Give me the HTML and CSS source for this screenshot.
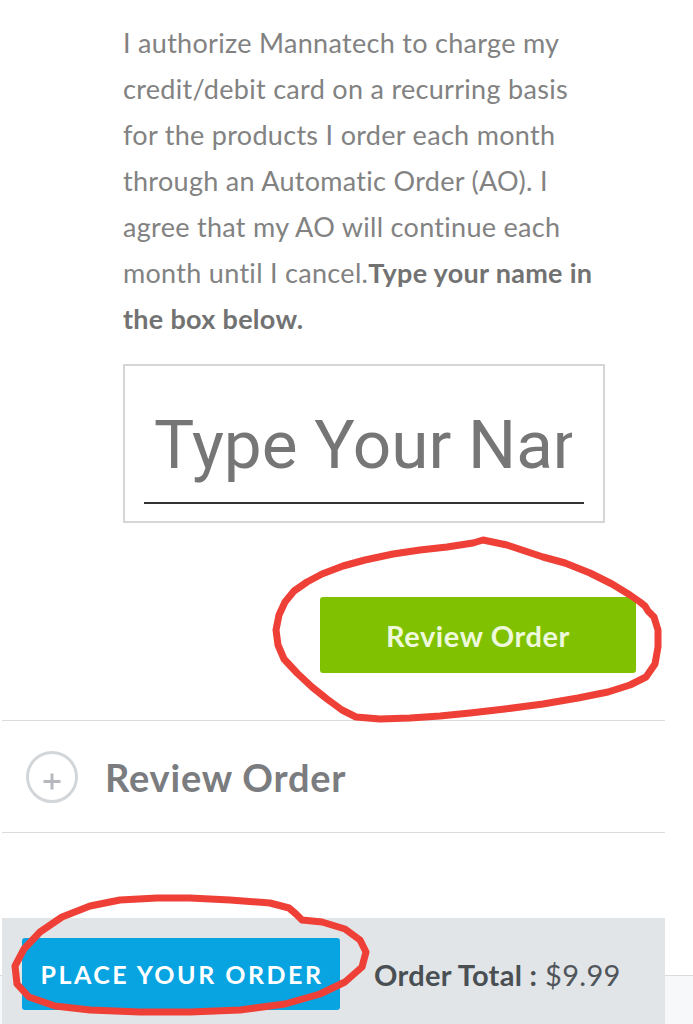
FILE: index.html
```html
<!DOCTYPE html>
<html lang="en">
<head>
<meta charset="utf-8">
<title>Checkout</title>
<link rel="stylesheet" href="styles.css">
</head>
<body>
<main class="checkout">
  <section class="authorize">
    <p class="terms">I authorize Mannatech to charge my credit/debit card on a recurring basis for the products I order each month through an Automatic Order (AO). I agree that my AO will continue each month until I cancel.<strong>Type your name in the box below.</strong></p>
    <div class="sig-box">
      <div class="sig-field">
        <div class="sig-text">Type Your Name</div>
      </div>
    </div>
    <button class="review-btn" type="button">Review Order</button>
  </section>
  <section class="review-head">
    <svg class="plus-icon" width="52" height="52" viewBox="0 0 52 52" aria-hidden="true">
      <circle cx="26" cy="26" r="24.5" fill="none" stroke="#d3d6d9" stroke-width="3"/>
      <path d="M17.5 30.5H34.5M26 22.5V38.5" stroke="#b5b8bc" stroke-width="3" fill="none"/>
    </svg>
    <h2 class="review-title">Review Order</h2>
  </section>
</main>
<footer class="site-foot"></footer>
<div class="order-bar">
  <button class="place-btn" type="button">PLACE YOUR ORDER</button>
  <div class="order-total"><strong>Order Total :</strong> $9.99</div>
</div>
<svg class="scribble" width="693" height="1024" viewBox="0 0 693 1024" aria-hidden="true">
  <path d="M543 557 L507 545 L483 540 L473 543 L447 547 L420 550 L393 554 L365 560 L343 566 L322 574 L307 582 L294 591 L285 602 L279 615 L276 630 L278 645 L284 659 L297 673 L312 687 L327 699 L342 710 L356 717 L380 719 L410 718 L440 716 L470 713 L505 709 L543 704 L578 698 L608 692 L630 685 L646 677 L655 664 L658 647 L658 630 L654 617 L648 611 L645 606 L640 602 L630 595 L612 584 L590 573 L565 563 L543 557" fill="none" stroke="#ef4038" stroke-width="7" stroke-linejoin="round" stroke-linecap="round"/>
  <path d="M157 898 L120 900 L90 906 L62 917 L40 932 L24 949 L15 966 L17 984 L29 997 L55 1006 L90 1010 L140 1012 L190 1012 L240 1010 L285 1004 L320 994 L345 982 L362 967 L366 952 L360 940 L345 929 L322 922 L302 920 L296 914 L289 908 L270 903 L230 900 L190 898 L157 898" fill="none" stroke="#ef4038" stroke-width="7" stroke-linejoin="round" stroke-linecap="round"/>
</svg>
</body>
</html>
```
FILE: styles.css
```css
html, body {
  margin: 0;
  padding: 0;
}
body {
  position: relative;
  height: 1024px;
  overflow: hidden;
  background: #ffffff;
  font-family: Lato, "Open Sans", sans-serif;
}
.checkout {
  margin-left: 2px;
  width: 663px;
  padding-bottom: 142px;
}
.authorize {
  display: flex;
  flex-direction: column;
  align-items: flex-start;
  padding: 20px 29px 0 121px;
}
.terms {
  margin: 0;
  width: 482px;
  font-size: 27px;
  letter-spacing: 0.3px;
  line-height: 46px;
  color: #828282;
}
.terms strong {
  font-weight: 700;
  color: #727272;
}
.sig-box {
  margin-top: 22px;
  width: 482px;
  height: 159px;
  box-sizing: border-box;
  border: 2px solid #d6d6d6;
  padding: 39px 19px 17px;
}
.sig-field {
  border-bottom: 2px solid #333333;
  padding: 0 12px 17px 10px;
}
.sig-text {
  font-family: Roboto, "Liberation Sans", sans-serif;
  font-size: 67.5px;
  line-height: 80px;
  color: #767676;
  white-space: nowrap;
  overflow: hidden;
}
.review-btn {
  align-self: flex-end;
  margin-top: 74px;
  width: 316px;
  height: 76px;
  border: 0;
  border-radius: 3px;
  background: #80c202;
  color: #eef9dc;
  font-family: Lato, sans-serif;
  font-weight: 700;
  font-size: 29px;
  letter-spacing: 0.6px;
  padding: 0;
}
.review-head {
  margin-top: 47px;
  height: 111px;
  border-top: 1px solid #dcdcdc;
  border-bottom: 1px solid #dcdcdc;
  display: flex;
  align-items: center;
  gap: 27px;
  padding-left: 24px;
}
.plus-icon {
  display: block;
  flex: none;
}
.review-title {
  margin: 0;
  font-size: 38px;
  letter-spacing: 0.8px;
  font-weight: 700;
  color: #7a7c7f;
}
.site-foot {
  height: 48px;
  border-top: 1px solid #d9dcdf;
  background: #f7f8fa;
}
.order-bar {
  position: absolute;
  left: 2px;
  top: 918px;
  width: 663px;
  height: 106px;
  box-sizing: border-box;
  padding: 20px;
  background: #e2e5e8;
  display: flex;
  align-items: flex-start;
}
.place-btn {
  flex: none;
  width: 318px;
  height: 72px;
  border: 0;
  border-radius: 3px;
  background: #08a4e2;
  color: #ffffff;
  font-family: Lato, sans-serif;
  font-weight: 700;
  font-size: 25px;
  letter-spacing: 2.5px;
  padding: 0 0 0 2px;
}
.order-total {
  height: 72px;
  display: flex;
  align-items: center;
  margin-left: 34px;
  font-size: 29px;
  letter-spacing: 0.3px;
  color: #50555a;
  white-space: pre;
}
.order-total strong {
  font-weight: 700;
  color: #4a4f54;
}
.scribble {
  position: absolute;
  left: 0;
  top: 0;
  pointer-events: none;
}
```
